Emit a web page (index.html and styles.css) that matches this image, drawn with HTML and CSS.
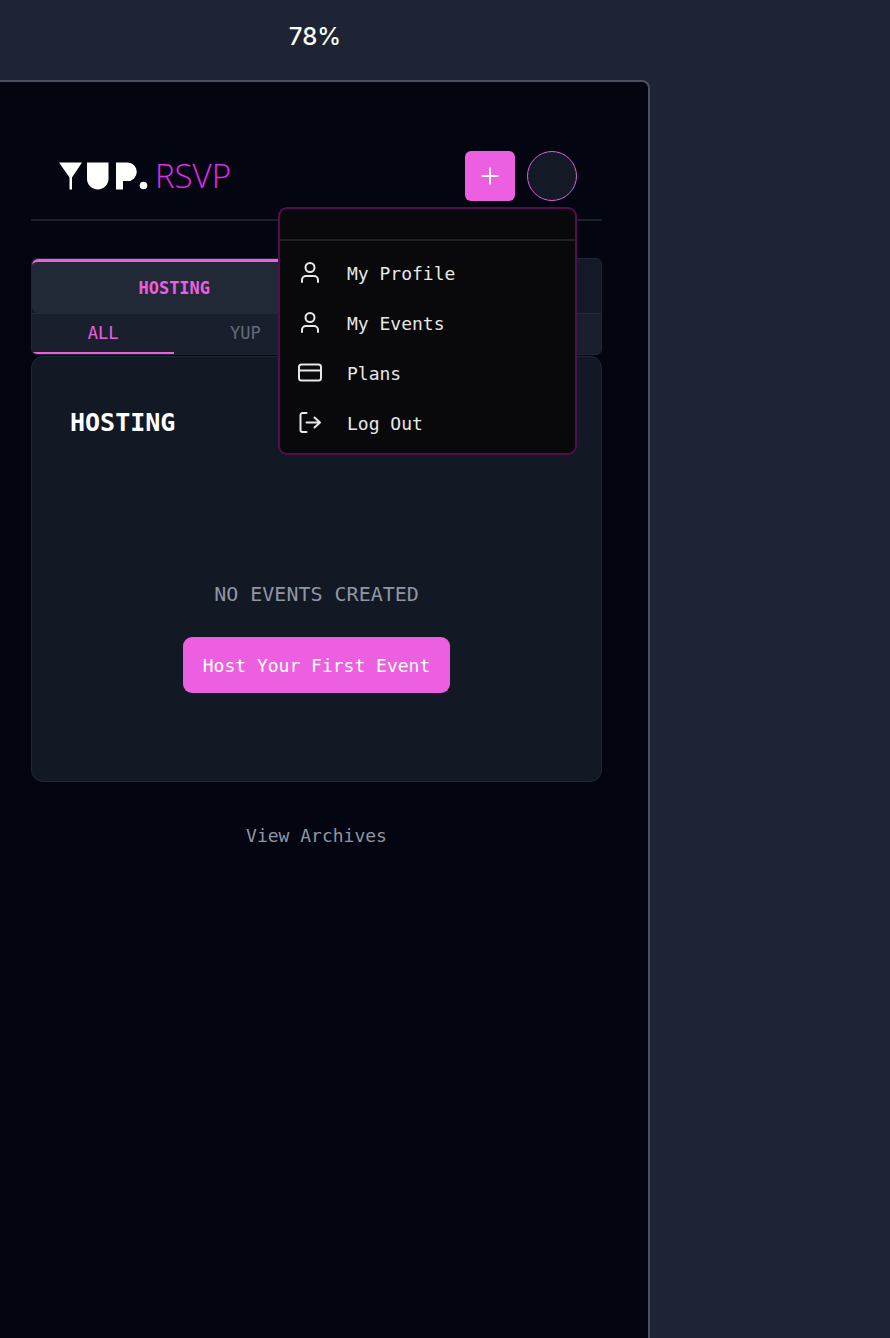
FILE: index.html
```html
<!DOCTYPE html>
<html lang="en">
<head>
<meta charset="utf-8">
<meta name="viewport" content="width=device-width, initial-scale=1">
<title>YUP.RSVP</title>
<link rel="stylesheet" href="styles.css">
</head>
<body>
<div class="canvas">
  <div class="zoom-level">78%</div>
  <div class="device">
    <header class="header">
      <a class="logo" href="#" aria-label="YUP.RSVP">
        <svg class="logo-mark" width="90" height="28" viewBox="0 0 90 28" fill="#fff" aria-hidden="true">
          <path d="M0 .5h23L13 15.500V27.500h-2.500V15.500z"/>
          <path d="M28 .5h21.500v16.200a10.750 10.750 0 0 1-21.500 0z"/>
          <path d="M57 .5h11.500a9.300 9.300 0 0 1 0 18.600H64v8.400h-7z"/>
          <circle cx="84.500" cy="23.500" r="3.800"/>
        </svg>
        <span class="logo-text">RSVP</span>
      </a>
      <div class="actions">
        <button class="add" type="button" aria-label="Create event">
          <svg width="20" height="20" viewBox="0 0 20 20" fill="none" stroke="#fff" stroke-width="2" stroke-linecap="round"><path d="M10 2.500v15M2.500 10h15"/></svg>
        </button>
        <div class="account">
          <button class="avatar" type="button" aria-label="Account"></button>
          <nav class="menu">
            <div class="menu-user"></div>
            <a class="menu-item" href="#">
              <svg class="icon" viewBox="0 0 24 24"><circle cx="12" cy="6.500" r="4.500"/><path d="M4 21v-2a4 4 0 0 1 4-4h8a4 4 0 0 1 4 4v2"/></svg>
              <span>My Profile</span>
            </a>
            <a class="menu-item" href="#">
              <svg class="icon" viewBox="0 0 24 24"><circle cx="12" cy="6.500" r="4.500"/><path d="M4 21v-2a4 4 0 0 1 4-4h8a4 4 0 0 1 4 4v2"/></svg>
              <span>My Events</span>
            </a>
            <a class="menu-item" href="#">
              <svg class="icon" viewBox="0 0 24 24"><rect x="1" y="3.500" width="22" height="16" rx="2.500"/><path d="M1 9.500h22"/></svg>
              <span>Plans</span>
            </a>
            <a class="menu-item" href="#">
              <svg class="icon" viewBox="0 0 24 24"><path d="M8.500 2H4.500a2 2 0 0 0-2 2v15a2 2 0 0 0 2 2h4M8.500 11.500h13.500M16.500 6.500l5.500 5-5.500 5"/></svg>
              <span>Log Out</span>
            </a>
          </nav>
        </div>
      </div>
    </header>

    <section class="tabs">
      <div class="tab-row">
        <button class="tab tab-active" type="button">HOSTING</button>
        <span class="tab"></span>
      </div>
      <div class="filter-row">
        <button class="filter filter-active" type="button">ALL</button>
        <button class="filter" type="button">YUP</button>
        <span class="filter"></span>
        <span class="filter"></span>
      </div>
    </section>

    <main class="panel">
      <h1 class="panel-title">HOSTING</h1>
      <div class="empty">
        <p class="empty-text">NO EVENTS CREATED</p>
        <button class="host" type="button">Host Your First Event</button>
      </div>
    </main>
    <a class="archives" href="#">View Archives</a>
  </div>
</div>
</body>
</html>
```
FILE: styles.css
```css
* { box-sizing: border-box; }

body {
  margin: 0;
  background: #1e2433;
  color: #fff;
  font-family: "DejaVu Sans Mono", monospace;
  font-size: 18px;
}

button {
  padding: 0;
  border: 0;
  background: none;
  color: inherit;
  font: inherit;
}

a {
  color: inherit;
  text-decoration: none;
}

.canvas {
  display: flex;
  flex-direction: column;
  min-height: 100vh;
  padding-right: 240px;
}

.zoom-level {
  padding: 21px 20px 27px 0;
  font: 500 24px/32px Inter, sans-serif;
  text-align: center;
}

.device {
  display: flex;
  flex: 1;
  flex-direction: column;
  padding: 69px 46px 32px 31px;
  border: 2px solid #4c5161;
  border-width: 2px 2px 0 0;
  border-radius: 0 8px 0 0;
  background: #030510;
}

.header {
  display: flex;
  align-items: center;
  justify-content: space-between;
  padding: 0 25px 18px 28px;
  border-bottom: 2px solid #1a202c;
}

.logo {
  display: flex;
  align-items: center;
  gap: 6px;
}

.logo-text {
  color: #e02bea;
  font: 300 33px/40px "Open Sans", sans-serif;
}

.actions {
  display: flex;
  gap: 12px;
}

.add {
  display: grid;
  place-items: center;
  width: 50px;
  height: 50px;
  border-radius: 6px;
  background: #ed5fe1;
}

.account {
  position: relative;
  height: 50px;
}

.avatar {
  width: 50px;
  height: 50px;
  border: 1px solid #e25bd8;
  border-radius: 50%;
  background: #131a26;
}

.menu {
  position: absolute;
  z-index: 1;
  top: calc(100% + 6px);
  right: 0;
  width: 299px;
  padding-bottom: 5px;
  border: 2px solid #560d50;
  border-radius: 9px;
  background: #09090b;
  color: #e8e8e6;
}

.menu-user {
  height: 32px;
  margin-bottom: 7px;
  border-bottom: 2px solid #202022;
}

.menu-item {
  display: flex;
  align-items: center;
  gap: 25px;
  height: 50px;
  padding: 0 18px;
}

.icon {
  width: 24px;
  height: 24px;
  fill: none;
  stroke: currentColor;
  stroke-width: 2;
  stroke-linecap: round;
  stroke-linejoin: round;
}

.tabs {
  margin-top: 37px;
  overflow: hidden;
  border: 1px solid #202734;
  border-radius: 6px;
  background: #191f2c;
}

.tab-row {
  display: grid;
  grid-template-columns: 1fr 1fr;
  border-bottom: 1px solid #232a37;
  background: #131926;
}

.tab {
  height: 54px;
  font-size: 17px;
  font-weight: 700;
}

.tab-active {
  border-top: 3px solid #ed5fe1;
  border-radius: 6px;
  border-top-right-radius: 0;
  background: #222936;
  color: #ed5fe1;
}

.filter-row {
  display: grid;
  grid-template-columns: repeat(4, 1fr);
}

.filter {
  height: 40px;
  border-bottom: 2px solid transparent;
  color: #646b79;
  font-size: 17px;
}

.filter-active {
  border-color: #ed5fe1;
  color: #ed5fe1;
}

.panel {
  margin-top: 1px;
  padding: 50px 38px 88px;
  border: 1px solid #212936;
  border-radius: 12px;
  background: #121824;
}

.panel-title {
  margin: 0;
  font-size: 25px;
  line-height: 32px;
}

.empty {
  display: flex;
  flex-direction: column;
  align-items: center;
  gap: 28px;
  margin-top: 140px;
}

.empty-text {
  margin: 0;
  color: #9096a3;
  font-size: 20px;
  line-height: 30px;
}

.host {
  height: 56px;
  padding: 0 20px;
  border-radius: 9px;
  background: #ed5fe1;
}

.archives {
  align-self: center;
  margin-top: 40px;
  color: #9096a3;
  line-height: 28px;
}
```
